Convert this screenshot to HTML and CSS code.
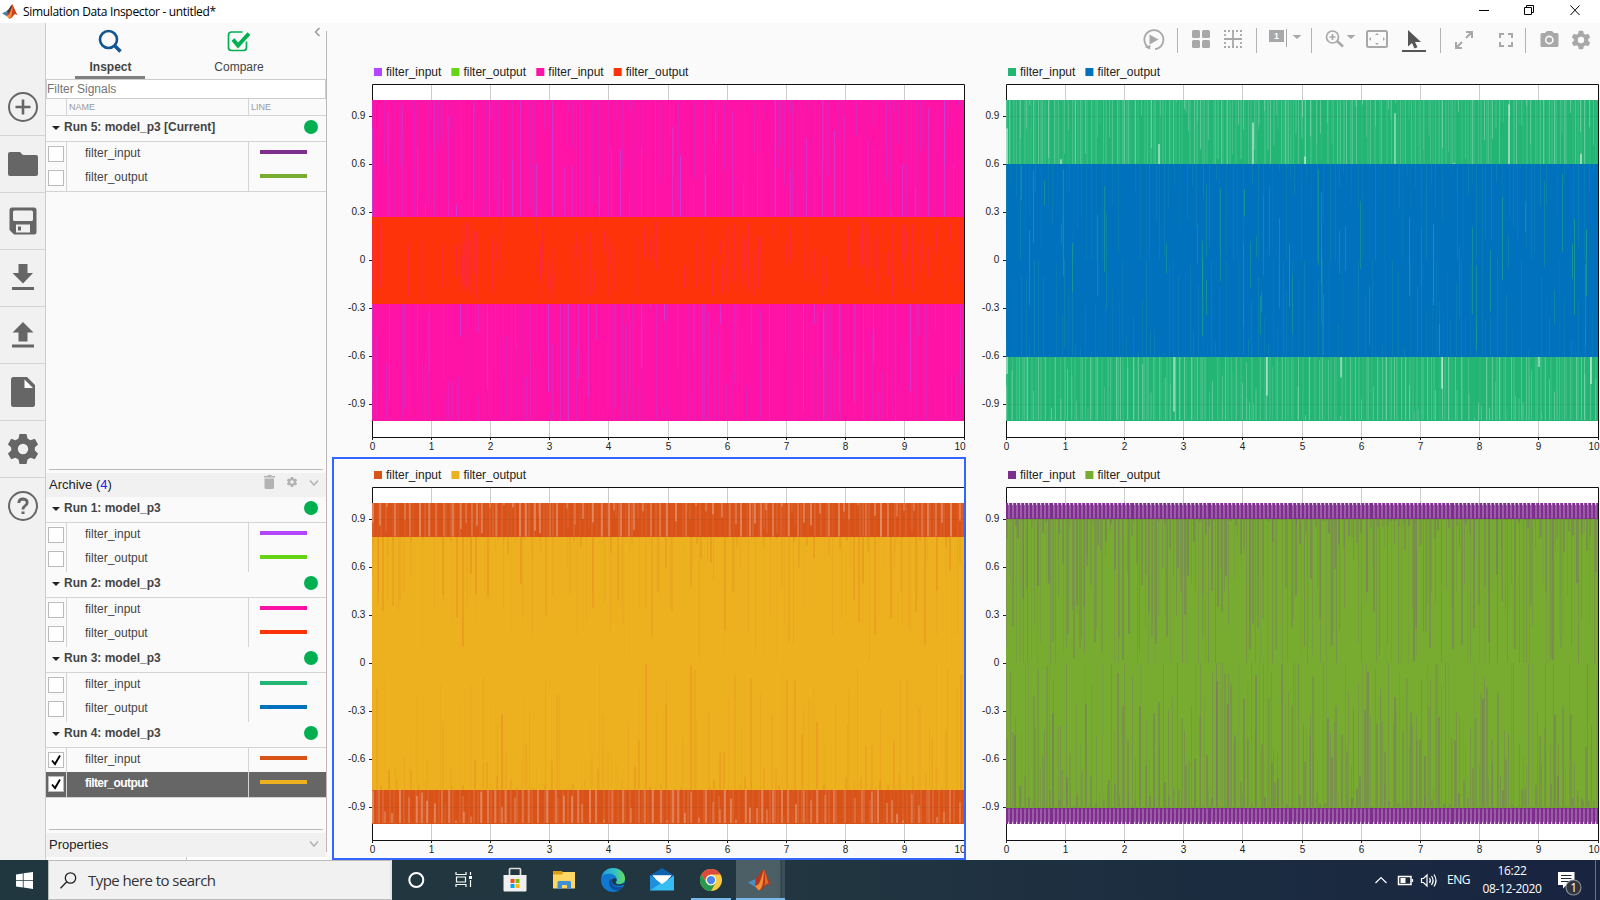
FILE: index.html
```html
<!DOCTYPE html>
<html lang="en">
<head>
<meta charset="utf-8">
<title>Simulation Data Inspector</title>
<link rel="stylesheet" href="styles.css">
</head>
<body>
<div class="app">
<header class="titlebar">
<svg class="logo" width="16" height="16" viewBox="0 0 38 36"><path d="M0 21l13-6 6 7-8 6z" fill="#3f86b8"/><path d="M12 15c6-3 8-13 13-15 3 5 8 19 13 27-6-5-8-5-12 1-3 4-6 6-9 6l-6-9z" fill="#c9401b"/><path d="M25 0c-2 9-5 18-8 24l-6 3 6 7c7-3 8-20 8-34z" fill="#f0913a"/><path d="M12 15c6-3 8-13 13-15-3 9-6 17-9 21z" fill="#40394a"/></svg>
<span class="title">Simulation Data Inspector - untitled*</span>
<svg class="winbtns" width="121" height="20" viewBox="1479 0 121 20" fill="none" stroke="#000"><path d="M1479 10.5h10M1524.500 7.500h7v7h-7zM1526.500 7v-1.500h7v7h-2M1570.500 5.500l9 9.500M1579.500 5.500l-9 9.500"/></svg>
</header>
<div class="body">
<nav class="rail">
<div class="cell first"><svg width="30" height="30" viewBox="0 0 30 30"><g fill="none" stroke="#666"><circle cx="15" cy="15" r="14" stroke-width="2"/><path d="M15 7.500v15M7.500 15h15" stroke-width="2.600"/></g></svg></div>
<div class="cell"><svg width="30" height="24" viewBox="0 0 30 24"><path fill="#666" d="M2 0h10l3 3h13q2 0 2 2v17q0 2-2 2H2q-2 0-2-2V2q0-2 2-2z"/></svg></div>
<div class="cell"><svg width="28" height="28" viewBox="0 0 28 28"><path fill="#666" d="M3 .500h22q2.500 0 2.500 2.500v22q0 2.500-2.500 2.500H5L.500 23V3q0-2.500 2.500-2.500z"/><rect x="4" y="3.500" width="20" height="10.500" rx="1.500" fill="#f1f1f1"/><path fill="#f1f1f1" d="M7 17.500h14v8H7z"/><path fill="#666" d="M9 19.500h3v4H9z"/></svg></div>
<div class="cell up"><svg width="22" height="26" viewBox="0 0 22 26"><path fill="#666" d="M6.500 0h9v9H21L11 19.500.500 9h6zM0 23h22v3H0z"/></svg></div>
<div class="cell"><svg width="22" height="26" viewBox="0 0 22 26"><path fill="#666" d="M11 0l10.500 10.500H15.500v9h-9v-9H.500zM0 22.500h22v3H0z"/></svg></div>
<div class="cell"><svg width="24" height="30" viewBox="0 0 24 30"><path fill="#666" d="M2.500 0H16l8 8v19.500q0 2.500-2.500 2.500h-19Q0 30 0 27.500v-25Q0 0 2.500 0z"/><path fill="#fff" d="M13.500 2.500V11H22z"/></svg></div>
<div class="cell"><svg width="30" height="30" viewBox="-15 -15 30 30"><use href="#gear" fill="#666"/></svg></div>
<div class="cell last up"><svg width="30" height="30" viewBox="0 0 30 30"><g fill="none" stroke="#666"><circle cx="15" cy="15" r="14" stroke-width="2"/><path d="M10.800 12q.2-4 4.300-4 4.100.2 4.100 3.600 0 2-2.200 3.300-2 1.200-2 3.600" stroke-width="2.800"/></g><path fill="#666" d="M13.500 20.500h3v2.500h-3z"/></svg></div>
</nav>
<aside class="panel">
<div class="tabs">
<div class="tab active"><svg width="24" height="24" viewBox="0 0 24 24" fill="none" stroke="#12568f"><circle cx="10.500" cy="10.500" r="8.500" stroke-width="2.600"/><path d="M16.500 16.500l6 6" stroke-width="3.600"/></svg><span>Inspect</span></div>
<div class="tab"><svg width="24" height="24" viewBox="-.5 -.5 24 24" fill="none" stroke="#00b050"><path d="M16 2.500H5Q2 2.500 2 5.500V18q0 3 3 3h12q3 0 3-3v-6" stroke-width="1.700"/><path d="M6.500 10l5 6L22.500 4" stroke-width="4"/></svg><span>Compare</span></div>
<svg class="collapse" width="7" height="10" viewBox="0 0 7 10"><path d="M5.500 1L1.500 5l4 4" fill="none" stroke="#999" stroke-width="1.500"/></svg>
</div>
<div class="filter">Filter Signals</div>
<div class="colhead"><span></span><span>NAME</span><span>LINE</span></div>
<div id="current"></div>
<div class="rule current-rule"></div>
<div class="section archive"><span>Archive (<b>4</b>)</span>
<svg width="56" height="16" viewBox="263 475 56 16"><path fill="#b3b3b3" d="M264 476h3l1-1h3l1 1h3v1.500h-11zM264.500 478.500h9.500v9q0 1.500-1.500 1.500h-6.500q-1.500 0-1.500-1.500z"/><g transform="translate(292 482) scale(.34)"><use href="#gear" fill="#b3b3b3"/></g><path d="M310 480.500l4 4.500 4-4.500" fill="none" stroke="#b3b3b3" stroke-width="1.500"/></svg></div>
<div id="archive"></div>
<div class="rule archive-rule"></div>
<div class="section properties"><span>Properties</span><svg width="10" height="8" viewBox="309 479 10 8"><path d="M310 480.500l4 4.500 4-4.500" fill="none" stroke="#b3b3b3" stroke-width="1.500"/></svg></div>
<div class="proprow"><span></span><span></span></div>
</aside>
<main class="main">
<div class="toolbar">
<svg width="34" height="30" viewBox="1143.500 24 34 30"><path d="M1149 47.500a9.500 9.500 0 1 1 6.500 1.600" fill="none" stroke="#a8a8a8" stroke-width="1.800"/><path fill="#a8a8a8" d="M1150 34.500l9 5-9 5zM1145 47l6-2-.500 4.500z"/></svg>
<i class="sep"></i>
<svg width="78" height="30" viewBox="1178 24 78 30"><g fill="#a8a8a8"><rect x="1192" y="30" width="8" height="8" rx="1.500"/><rect x="1202" y="30" width="8" height="8" rx="1.500"/><rect x="1192" y="40" width="8" height="8" rx="1.500"/><rect x="1202" y="40" width="8" height="8" rx="1.500"/></g><g fill="none" stroke="#a8a8a8" stroke-width="1.800"><path d="M1233 30v18M1224 39h18"/><path stroke-dasharray="2 2" d="M1224 31h18M1224 47h18M1225 34v12M1241 34v12"/></g></svg>
<i class="sep"></i>
<svg width="54" height="30" viewBox="1257 24 54 30"><path fill="#a8a8a8" d="M1269 30h15v12h-15zM1286 29h1v18h-1zM1292.500 35h9l-4.500 4z"/><text x="1276.500" y="39" fill="#fff" font-size="9" font-weight="bold" text-anchor="middle">1</text></svg>
<i class="sep"></i>
<svg width="128" height="30" viewBox="1312 24 128 30"><g fill="none" stroke="#a8a8a8" stroke-width="1.700"><circle cx="1332.500" cy="37" r="6"/><path d="M1332.500 34v6M1329.500 37h6"/><path d="M1337 41l6 5.500" stroke-width="2.600"/><rect x="1367" y="31" width="20" height="16" rx="1.500" stroke-width="2"/></g><path fill="#a8a8a8" d="M1346.500 35h9l-4.500 4zM1375 35l2-2 2 2zM1375 43l2 2 2-2zM1371 37l-2 2 2 2zM1383 37l2 2-2 2z"/><path fill="#555" d="M1408 30v16.500l4-3.500 2.500 5.500 3-1.300-2.500-5.200h6zM1402 50h24v2h-24z"/></svg>
<i class="sep"></i>
<svg width="84" height="30" viewBox="1441 24 84 30"><g fill="none" stroke="#a8a8a8" stroke-width="2"><path d="M1466 38l6-6M1466 32h6v6M1462 42l-6 6M1456 42v6h6M1500 38v-4h4M1508 34h4v4M1512 42v4h-4M1504 46h-4v-4"/></g></svg>
<i class="sep"></i>
<svg width="74" height="30" viewBox="1526 24 74 30"><path fill="#a8a8a8" d="M1542 33h3l2-2h5l2 2h3q1.500 0 1.500 1.500v11q0 1.500-1.500 1.500h-15q-1.500 0-1.500-1.500v-11q0-1.500 1.500-1.500z"/><circle cx="1549.300" cy="40" r="3.600" fill="#a8a8a8" stroke="#fafafa" stroke-width="1.600"/><g transform="translate(1581 40) scale(.61)"><use href="#gear" fill="#a8a8a8"/></g></svg>
</div>
<div class="plots" id="plots"></div>
</main>
</div>
<footer class="taskbar">
<div class="start"><svg width="17" height="17" viewBox="0 0 17 17"><path fill="#fff" d="M0 2.400l6.800-1v6.600H0zM7.600 1.300L17 0v8H7.600zM0 8.800h6.800v6.700L0 14.600zM7.600 8.800H17V17l-9.400-1.400z"/></svg></div>
<div class="search"><svg width="17" height="17" viewBox="0 0 17 17" fill="none" stroke="#222" stroke-width="1.300"><circle cx="10.500" cy="6" r="5.200"/><path d="M6.800 9.800L.5 16.200"/></svg><span>Type here to search</span></div>
<div class="apps">
<div class="appbtn"><svg width="24" height="24" viewBox="0 0 24 24"><circle cx="11.300" cy="12" r="7" fill="none" stroke="#fff" stroke-width="2"/></svg></div>
<div class="appbtn"><svg width="24" height="24" viewBox="1 0 24 24" fill="none" stroke="#fff" stroke-width="1.200"><path d="M3 4v2.500h10V4M3 19v-2.500h10V19M3.500 9h9v5h-9zM17.500 4v3M17.500 12v7"/><path d="M16 9.500h3" stroke-width="3"/></svg></div>
<div class="appbtn"><svg width="24" height="26" viewBox="0 0 24 26"><path d="M6.500 8V2.500q0-1 1-1h9q1 0 1 1V8" fill="none" stroke="#ddd" stroke-width="1.700"/><path fill="#f0f0f0" d="M.500 8h23v15.500q0 1-1 1h-21q-1 0-1-1z"/><path fill="#f25022" d="M7.500 12h4v4h-4z"/><path fill="#7fba00" d="M12.500 12h4v4h-4z"/><path fill="#00a4ef" d="M7.500 17h4v4h-4z"/><path fill="#ffb900" d="M12.500 17h4v4h-4z"/></svg></div>
<div class="appbtn"><svg width="22" height="20" viewBox="0 0 22 20"><path fill="#fdd663" d="M0 2h22v16.500H0z"/><path fill="#e09b10" d="M0 1h9l1 2-1.500 1.500H0z"/><path fill="#3f8fd6" d="M4.500 19v-6.500q0-1.500 1.500-1.500h10.500q1.500 0 1.500 1.500V19h-4v-4H9v4z"/></svg></div>
<div class="appbtn"><svg width="24" height="24" viewBox="0 0 24 24"><defs><linearGradient id="eg" x1="0" x2="1"><stop offset="0" stop-color="#1e9de0"/><stop offset=".6" stop-color="#35c2c0"/><stop offset="1" stop-color="#6ade50"/></linearGradient></defs><circle cx="12" cy="12" r="12" fill="#0f78d0"/><path fill="url(#eg)" d="M.500 9C2 3 7 0 12 0c7 0 12 5 12 10.500 0 4-3 5.500-6 5.500-2 0-3.500-.8-3-1.800 1-1.200 1-1.800 1-2.700C15.500 5 4 4 .500 9z"/><path fill="#0c4f9c" d="M9 11c-3 5 1 11 6.500 11.500 2.500 0 5-1.500 6.500-4-7 2.500-12-1.500-11-6.500z"/><path fill="#223640" d="M11 12c.5-2.500 4.500-2.500 4.500 0 0 1.500-1 2-.8 3 .8 2 4.300 1.700 9.500 0-1 2.500-6.700 3-8.700 2.600-3-.6-5-3.100-4.500-5.600z"/></svg></div>
<div class="appbtn"><svg width="24" height="24" viewBox="0 0 24 24"><path fill="#0f62ae" d="M0 7.500L12 0l12 7.500V12H0z"/><path fill="#fff" d="M2.500 7.500h19l-8 9h-3z"/><path fill="#36bdf4" d="M0 7.500L12 16l12-8.500V22.500H0z"/><path fill="#1f8fdb" d="M0 22.500V7.500l10.500 7.700z"/><path fill="#fff" d="M2.500 7.500h19L12 14.500z"/></svg></div>
<div class="appbtn run"><svg width="22" height="22" viewBox="-12 -12 24 24"><circle r="12" fill="#f9cb43"/><path fill="#dc4b3e" d="M-10.400-6A12 12 0 0 1 10.400-6H0A6 6 0 0 0-5.200 3z"/><path fill="#28984f" d="M-10.400-6A12 12 0 0 0 0 12L5.200 3A6 6 0 0 1-5.200 3z"/><circle r="5.600" fill="#fff"/><circle r="4.500" fill="#4a86ee"/></svg></div>
<div class="appbtn run sel"><svg width="24" height="23" viewBox="0 0 38 36"><path d="M0 21l13-6 6 7-8 6z" fill="#4a90c0"/><path d="M12 15c6-3 8-13 13-15 3 5 8 19 13 27-6-5-8-5-12 1-3 4-6 6-9 6l-6-9z" fill="#b8341a"/><path d="M25 0c-2 9-5 18-8 24l-6 3 6 7c7-3 8-20 8-34z" fill="#f0913a"/><path d="M25 0c2 8 3 17 1 27 2-3 5-5 7-4-3-8-5-18-8-23z" fill="#df6a26"/></svg></div>
</div>
<div class="tray">
<svg width="66" height="20" viewBox="1374 870 66 20" fill="none" stroke="#fff" stroke-width="1.200"><path d="M1375.500 883l5.500-5.500 5.500 5.500"/><path d="M1398.500 876.500h12.500v8h-12.500z" stroke-width="1.500"/><path d="M1412.500 879v3"/><path fill="#fff" stroke="none" d="M1400.500 878h5v5h-5z"/><path d="M1421.500 878.500h2l3.500-3.500v11l-3.500-3.500h-2zM1429.500 878q1.700 2.500 0 5M1431.500 876q3.200 4.500 0 9M1434 874.500q4 6 0 12"/></svg>
<span class="lang">ENG</span>
<div class="clock"><span>16:22</span><span>08-12-2020</span></div>
<svg width="26" height="34" viewBox="1559 863 26 34"><path fill="#fff" d="M1559 872h16.500v13h-8l-3.500 3.500V885h-5z"/><path d="M1562 875.500h10.500M1562 878.500h10.500M1562 881.500h10.500" stroke="#1c2a40" stroke-width="1.100"/><circle cx="1574.500" cy="887.500" r="7.500" fill="#30353d" stroke="#8d939c" stroke-width="1.100"/><text x="1574.500" y="892" fill="#fff" font-size="12" text-anchor="middle">1</text></svg>
<i class="peek"></i>
</div>
</footer>
</div>
<svg class="defs" width="0" height="0"><defs><path id="gear" fill-rule="evenodd" d="M-3.500-15h7l1 4.500 3 1.700 4.300-1.500 3.300 5.800-3.300 3v3l3.300 3-3.300 5.800-4.300-1.500-3 1.700-1 4.500h-7l-1-4.500-3-1.700-4.300 1.500-3.300-5.800 3.300-3v-3l-3.300-3 3.300-5.800 4.300 1.500 3-1.700zM0-5.200a5.200 5.200 0 1 0 0 10.400a5.200 5.200 0 1 0 0-10.400z"/></defs></svg>
<script src="script.js"></script>
</body>
</html>
```
FILE: styles.css
```css
* { box-sizing: border-box; }
body { margin: 0; background: #fafafa; font-family: "Liberation Sans", Arial, sans-serif; font-size: 12px; color: #444; overflow: hidden; }
svg { display: block; flex: none; }
.defs { position: absolute; }
.app { width: 1600px; height: 900px; display: flex; flex-direction: column; }
.titlebar { height: 23px; background: #fff; display: flex; align-items: flex-start; }
.logo { margin: 4px 4px 0 2px; }
.title { margin: 3px auto 0 1px; font-family: "Open Sans", "Noto Sans", sans-serif; font-size: 12px; line-height: 17px; color: #000; letter-spacing: -0.33px; }
.body { height: 837px; display: flex; }
.rail { width: 46px; background: #f1f1f1; border-right: 1px solid #ccc; display: flex; flex-direction: column; }
.cell { height: 57px; border-bottom: 1px solid #d4d4d4; display: flex; align-items: center; justify-content: center; }
.cell.up { padding-bottom: 2px; }
.cell.first { height: 113px; padding-top: 56px; }
.cell.last { border-bottom: 0; }
.panel { width: 281px; position: relative; display: flex; flex-direction: column; }
.panel::after { content: ""; position: absolute; right: 0; top: 8px; bottom: 8px; width: 1px; background: #bbb; }
.tabs { height: 56px; display: flex; position: relative; padding-left: 29px; gap: 58px; }
.tab { width: 70px; height: 56px; display: flex; flex-direction: column; align-items: center; padding-top: 6px; }
.tab svg { margin-bottom: 6px; }
.tab span { line-height: 17px; height: 17px; font-size: 12px; margin-left: 2px; }
.tab.active { border-bottom: 3px solid #808080; }
.tab.active span { font-weight: bold; margin-left: 1px; }
.collapse { position: absolute; right: 6px; top: 4px; }
.filter { width: 280px; height: 20px; background: #fff; border: 1px solid #ccc; line-height: 19px; color: #757575; }
.colhead { height: 17px; width: 280px; display: grid; grid-template-columns: 20px 182px 1fr; border-bottom: 1px solid #d4d4d4; font-size: 9px; line-height: 16px; color: #999; }
.colhead span + span { border-left: 1px solid #d4d4d4; padding-left: 2px; }
.run { width: 280px; }
.runhead { height: 26px; border-bottom: 1px solid #d4d4d4; display: flex; align-items: center; padding: 0 8px 4px 6px; font-weight: bold; }
.runhead i { border: 4px solid transparent; border-top-color: #222; border-bottom: 0; margin-right: 4px; margin-top: 3px; }
.runhead u { width: 14px; height: 14px; border-radius: 50%; background: #00b050; margin-left: auto; }
.sig { height: 24px; display: grid; grid-template-columns: 20px 182px 1fr; }
.sig + .sig { height: 25px; }
.sig > * + * { border-left: 1px solid #d4d4d4; }
.sig .cb { padding: 4px 0 0 2px; }
.sig .cb svg { background: #fff; border: 1px solid #bbb; }
.sig .nm { padding-left: 18px; line-height: 22px; }
.sig .ln { padding: 8px 0 0 11px; }
.sig .ln b { display: block; width: 47px; height: 4px; }
.sig.on { background: #666; color: #fff; font-weight: bold; letter-spacing: -0.58px; }
.last-run { border-bottom: 1px solid #d4d4d4; }
#current .run { border-bottom: 1px solid #d4d4d4; }
.rule { height: 1px; background: #bbb; margin: 0 4px 3px 3px; }
.current-rule { margin-top: 277px; }
.archive-rule { margin-top: 31px; }
.section { width: 280px; height: 24px; background: #f1f1f1; display: flex; justify-content: space-between; padding: 0 7px 0 3px; font-size: 13px; line-height: 23px; color: #222; }
.section b { font-weight: normal; color: #22e; }
.archive svg { margin-top: 2px; }
.properties svg { margin-top: 7px; }
.proprow { height: 3px; display: grid; grid-template-columns: 140px 140px; }
.proprow span + span { background: #fff; border-left: 1px solid #ccc; }
.main { width: 1273px; padding-left: 5px; }
.toolbar { height: 31px; padding-top: 1px; display: flex; justify-content: flex-end; }
.sep { width: 1px; height: 25px; background: #b3b3b3; margin-top: 4px; }
.plots { display: grid; grid-template-columns: 634px 634px; grid-template-rows: 403px 403px; }
.plot { position: relative; }
.plot.selected::after { content: ""; position: absolute; inset: 0; border: 2px solid #3366ff; }
.taskbar { height: 40px; background: linear-gradient(90deg, #21373f, #213640 50%, #1b2b40 78%, #192440); display: flex; }
.start { width: 48px; display: flex; align-items: center; justify-content: center; }
.search { width: 344px; background: #f1f1f1; border: 1px solid #bbb; border-right: 2px solid #e4e4e4; display: flex; align-items: center; padding-left: 11px; gap: 11px; font-family: "Open Sans", "Noto Sans", sans-serif; font-size: 15px; color: #333; letter-spacing: -0.56px; }
.apps { display: flex; }
.appbtn { width: 49px; height: 40px; display: flex; align-items: center; justify-content: center; border-bottom: 0; }
.appbtn.run { width: 49px; background: linear-gradient(#76b9ed, #76b9ed) 5px 38px / 40px 2px no-repeat; }
.appbtn.sel { background: linear-gradient(#76b9ed, #76b9ed) 0 38px / 49px 2px no-repeat, linear-gradient(90deg, #4c5e66 44px, #243a44 45px, #3c4f59 46px); margin-left: 1px; padding-right: 2px; }
.tray { margin-left: auto; display: flex; align-items: center; color: #fff; font-family: "Open Sans", "Noto Sans", sans-serif; font-size: 12px; letter-spacing: -0.2px; }
.lang { margin: -1px 13px 0 7px; width: 23px; letter-spacing: -0.5px; }
.clock { width: 58px; display: flex; flex-direction: column; align-items: center; line-height: 18px; margin-right: 17px; letter-spacing: -0.35px; white-space: nowrap; }
.peek { width: 1px; height: 40px; background: #697080; margin: 0 4px 0 11px; }
```
FILE: script.js
```js
// Signal tree
const runs = [
  ['Run 5: model_p3 [Current]', '#7e2f8e', '#77ac30'],
  ['Run 1: model_p3', '#b446ff', '#65d415'],
  ['Run 2: model_p3', '#ff13a6', '#fe330a'],
  ['Run 3: model_p3', '#22b573', '#0072bd'],
  ['Run 4: model_p3', '#d95319', '#edb120']
];
const signal = (name, color, checked, on) =>
  `<div class="sig ${on ? 'on' : ''}"><div class="cb"><svg width="16" height="16" viewBox="0 0 14 14">` +
  (checked ? '<path d="M3 7.500l3 3.500 5-8.500" fill="none" stroke="#000" stroke-width="1.900"/>' : '') +
  `</svg></div><div class="nm">${name}</div><div class="ln"><b style="background:${color}"></b></div></div>`;
const runRow = (r, last) =>
  `<div class="run ${last ? 'last-run' : ''}"><div class="runhead"><i></i>${r[0]}<u></u></div>` +
  signal('filter_input', r[1], last, false) + signal('filter_output', r[2], last, last) + '</div>';
document.getElementById('current').innerHTML = runRow(runs[0], false);
document.getElementById('archive').innerHTML = runs.slice(1).map((r, i) => runRow(r, i === 3)).join('');

// Plots
let seed = 7;
const rnd = () => (seed = (seed * 16807) % 2147483647) / 2147483647;
const X0 = 40, W = 592, ZERO = 206, UNIT = 160;

// Mirrored vertical streaks between two amplitudes
function streaks(outer, inner, color, step, width, opMin, opMax, fromOuter, full, power) {
  let s = '';
  const range = (outer - inner) * UNIT;
  for (const side of [-1, 1]) {
    for (let x = 0; x < W - width; x += step * (0.6 + 0.8 * rnd())) {
      const h = rnd() < full ? range : range * Math.pow(rnd(), power);
      const a = fromOuter ? outer * UNIT - h : inner * UNIT;
      const y = side < 0 ? ZERO - a - h : ZERO + a;
      s += `<rect x="${X0 + Math.round(x)}" y="${y.toFixed(1)}" width="${width}" height="${h.toFixed(1)}" fill="${color}" opacity="${(opMin + (opMax - opMin) * rnd()).toFixed(2)}"/>`;
    }
  }
  return s;
}

// Streaks that float inside the band and may cross zero
function floating(amp, color, count, opMin, opMax, minLen, maxLen) {
  let s = '';
  for (let i = 0; i < count; i++) {
    const h = minLen + (maxLen - minLen) * rnd();
    const y = ZERO - amp * UNIT + rnd() * (2 * amp * UNIT - h);
    s += `<rect x="${X0 + Math.floor(rnd() * (W - 1))}" y="${y.toFixed(1)}" width="1" height="${h.toFixed(1)}" fill="${color}" opacity="${(opMin + (opMax - opMin) * rnd()).toFixed(2)}"/>`;
  }
  return s;
}
const band = (amp, color) =>
  `<rect x="${X0}" y="${Math.round(ZERO - amp * UNIT)}" width="${W}" height="${Math.floor(2 * amp * UNIT) + 1}" fill="${color}"/>`;

function regular(outer, inner, color, opacity, period, width) {
  let s = '';
  for (let x = 2; x < W - 2; x += period) {
    for (const y of [ZERO - outer * UNIT, ZERO + inner * UNIT]) {
      s += `<rect x="${X0 + Math.round(x)}" y="${y}" width="${width}" height="${(outer - inner) * UNIT + 1}" fill="${color}" opacity="${opacity}"/>`;
    }
  }
  return s;
}

const plots = [
  { legend: [['filter_input', '#b446ff'], ['filter_output', '#65d415'], ['filter_input', '#ff13a6'], ['filter_output', '#fe330a']],
    draw: () => band(1, '#ff13a6') + streaks(1, 0.27, '#b43ce0', 4, 1, 0.1, 0.42, true, 0.3, 1.3) +
      streaks(1, 0.27, '#b050f0', 13, 1, 0.25, 0.6, false, 0.25, 0.8) +
      band(0.27, '#fe330a') + floating(0.27, '#ff1a80', 190, 0.12, 0.4, 12, 70) },
  { legend: [['filter_input', '#22b573'], ['filter_output', '#0072bd']],
    draw: () => band(1, '#22b573') + streaks(1, 0.6, '#fff', 5, 2, 0.04, 0.12, true, 0.8, 1) +
      streaks(1, 0.6, '#fff', 5, 1, 0.12, 0.28, true, 0.6, 1) + streaks(1, 0.6, '#fff', 75, 2, 0.4, 0.5, false, 0, 1) +
      band(0.6, '#0072bd') + streaks(0.6, 0, '#1a96a0', 5, 1, 0.12, 0.4, true, 0.3, 1.1) +
      floating(0.6, '#22a585', 55, 0.3, 0.75, 20, 110) },
  { selected: true, legend: [['filter_input', '#d95319'], ['filter_output', '#edb120']],
    draw: () => band(1, '#d95319') + streaks(1, 0.79, '#fff', 5, 2, 0.02, 0.1, true, 0.9, 1) +
      streaks(1, 0.79, '#fff', 7.5, 2, 0.15, 0.26, true, 0.45, 1) +
      band(0.79, '#edb120') + streaks(0.79, 0, '#d95319', 6, 2, 0.05, 0.2, true, 0, 3) +
      streaks(0.79, 0, '#d9701a', 9, 1, 0.05, 0.16, true, 0, 0.7) },
  { legend: [['filter_input', '#7e2f8e'], ['filter_output', '#77ac30']],
    draw: () => band(1, '#7e2f8e') + regular(1, 0.91, '#fff', 0.22, 4.05, 2) +
      regular(1, 0.993, '#fff', 0.7, 4.05, 1) +
      band(0.9, '#77ac30') + streaks(0.9, 0, '#7e6080', 4, 1, 0.12, 0.34, true, 0.3, 0.8) +
      streaks(0.9, 0, '#7e6080', 4.2, 2, 0.2, 0.42, true, 0, 1.8) }
];

document.getElementById('plots').innerHTML = plots.map((p, index) => {
  let s = `<rect x="40" y="30" width="${W}" height="353" fill="#fff"/>`;
  for (let i = 1; i < 10; i++) {
    s += `<path d="M${Math.floor(X0 + i * 59.2) + 0.5} 31V383" stroke="#ccc"/>`;
  }
  s += p.draw();
  if (index) s += '<path d="M41 62.500H632M41 350.500H632" stroke="#333" opacity=".07"/>';
  s += '<path d="M40.500 46V30.500H632.500V386M40.500 367V386M40 383.500H633" fill="none" stroke="#111"/>';
  for (let i = 0; i <= 10; i++) {
    const x = Math.floor(X0 + i * 59.2);
    s += `<path d="M${x + 0.5} 383v3" stroke="#222"/>` +
      `<text x="${i === 10 ? 628 : x + 0.5}" y="396" font-size="10" fill="#222" text-anchor="middle">${i}</text>`;
  }
  ['0.9', '0.6', '0.3', '0', '-0.3', '-0.6', '-0.9'].forEach((t, i) => {
    s += `<path d="M37 ${62.5 + 48 * i}h3" stroke="#222"/>` +
      `<text x="33.300" y="${65 + 48 * i}" font-size="10" fill="#222" text-anchor="end">${t}</text>`;
  });
  let lx = 42;
  for (const [name, color] of p.legend) {
    s += `<rect x="${lx}" y="14" width="8" height="8" fill="${color}"/>` +
      `<text x="${lx + 12}" y="22" font-size="12" fill="#222">${name}</text>`;
    lx += name === 'filter_input' ? 77.4 : 84.9;
  }
  return `<div class="plot ${p.selected ? 'selected' : ''}"><svg width="634" height="403" viewBox="0 0 634 403">${s}</svg></div>`;
}).join('');
```
